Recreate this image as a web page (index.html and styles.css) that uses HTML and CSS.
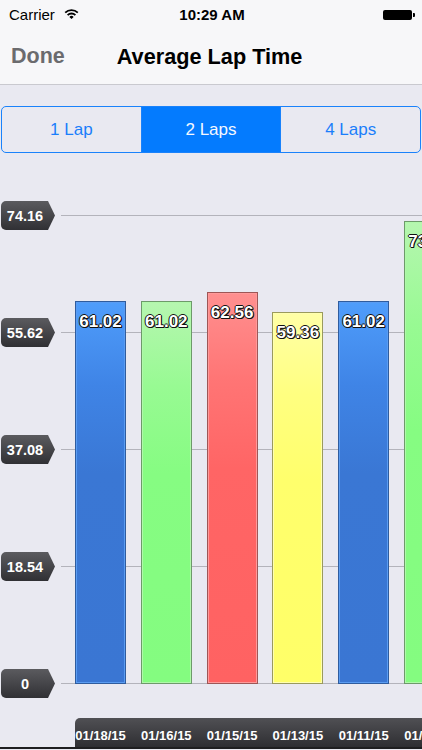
FILE: index.html
```html
<!DOCTYPE html>
<html>
<head>
<meta charset="utf-8">
<link rel="stylesheet" href="styles.css">
</head>
<body>
<div class="screen">
  <header class="top">
    <div class="status">
      <div class="status-left">
        <span class="carrier">Carrier</span>
        <svg class="wifi" width="15" height="11" viewBox="0 0 15 11">
          <path d="M1.2 4.7 A9 9 0 0 1 13.8 4.7" fill="none" stroke="#000" stroke-width="1.8"/>
          <path d="M3.6 7.1 A5.6 5.6 0 0 1 11.4 7.1" fill="none" stroke="#000" stroke-width="1.8"/>
          <path d="M7.5 11 L5.4 8.9 A3 3 0 0 1 9.6 8.9 Z" fill="#000"/>
        </svg>
      </div>
      <div class="time">10:29 AM</div>
      <div class="status-right">
        <div class="battery"><div class="battery-body"></div><div class="battery-nub"></div></div>
      </div>
    </div>
    <nav class="navbar">
      <span class="done">Done</span>
      <span class="title">Average Lap Time</span>
    </nav>
  </header>

  <div class="segment-wrap">
    <div class="segmented">
      <div class="seg">1 Lap</div>
      <div class="seg active">2 Laps</div>
      <div class="seg">4 Laps</div>
    </div>
  </div>

  <div class="chart">
    <div class="axis">
      <div class="tick">74.16</div>
      <div class="tick">55.62</div>
      <div class="tick">37.08</div>
      <div class="tick">18.54</div>
      <div class="tick">0</div>
    </div>
    <div class="plot">
      <div class="lines">
        <div class="line"></div>
        <div class="line"></div>
        <div class="line"></div>
        <div class="line"></div>
        <div class="line"></div>
      </div>
      <div class="bars">
        <div class="bar blue" style="height:383px"><span class="val">61.02</span></div>
        <div class="bar green" style="height:383px"><span class="val">61.02</span></div>
        <div class="bar red" style="height:392px"><span class="val">62.56</span></div>
        <div class="bar yellow" style="height:372px"><span class="val">59.36</span></div>
        <div class="bar blue" style="height:383px"><span class="val">61.02</span></div>
        <div class="bar green" style="height:463px"><span class="val">73.82</span></div>
      </div>
    </div>
  </div>

  <div class="dates">
    <span class="date">01/18/15</span>
    <span class="date">01/16/15</span>
    <span class="date">01/15/15</span>
    <span class="date">01/13/15</span>
    <span class="date">01/11/15</span>
    <span class="date">01/09/15</span>
  </div>
  <div class="bottom-edge"></div>
</div>
</body>
</html>
```
FILE: styles.css
```css
* { box-sizing: border-box; }
html, body { margin: 0; padding: 0; }
body {
  width: 422px;
  height: 750px;
  overflow: hidden;
  background: #e9e9f1;
  font-family: "Liberation Sans", Arial, sans-serif;
}
.screen {
  width: 422px;
  height: 750px;
  display: flex;
  flex-direction: column;
  overflow: hidden;
}
.top {
  background: #f7f7f9;
  border-bottom: 1px solid #c9c9cf;
}
.status {
  height: 26px;
  display: flex;
  align-items: center;
  justify-content: space-between;
  padding: 3px 7px 0 9px;
}
.status-left { display: flex; align-items: center; gap: 9px; width: 120px; }
.carrier { font-size: 15px; color: #000; }
.wifi { margin-top: -2px; }
.time { font-size: 15px; font-weight: bold; color: #000; }
.status-right { width: 120px; display: flex; justify-content: flex-end; }
.battery { display: flex; align-items: center; }
.battery-body { width: 29px; height: 10px; background: #000; border-radius: 2px; }
.battery-nub { width: 2px; height: 4px; background: #000; margin-left: 1px; border-radius: 0 1px 1px 0; }
.navbar {
  height: 58px;
  display: flex;
  align-items: center;
  padding: 3px 11px 0 11px;
}
.done { font-size: 21.5px; font-weight: bold; color: #6b6b6e; }
.title {
  font-size: 21.7px;
  font-weight: bold;
  color: #000;
  margin-left: 52px;
}
.segment-wrap { padding: 21px 1px 0 1px; }
.segmented {
  display: flex;
  height: 47px;
  border: 1px solid #1a82fb;
  border-radius: 5px;
  overflow: hidden;
}
.seg {
  flex: 1;
  display: flex;
  align-items: center;
  justify-content: center;
  font-size: 17px;
  color: #1a7efb;
  border-left: 1px solid #1a82fb;
}
.seg:first-child { border-left: none; }
.seg.active { background: #047bfe; color: #f4f8ff; }

.chart {
  margin-top: 62px;
  display: grid;
  grid-template-columns: 61px 1fr;
  height: 469px;
}
.axis {
  display: flex;
  flex-direction: column;
  justify-content: space-between;
  margin: -14px 0;
  padding-left: 1px;
}
.tick {
  width: 55px;
  height: 29px;
  background: linear-gradient(#5b5b5f, #303034);
  border-radius: 5px;
  clip-path: polygon(0 0, 47px 0, 54px 50%, 47px 100%, 0 100%);
  color: #fff;
  font-weight: bold;
  font-size: 14.5px;
  display: flex;
  align-items: center;
  justify-content: center;
  padding-right: 7px;
}
.plot {
  display: grid;
  overflow: hidden;
}
.lines, .bars { grid-area: 1 / 1; }
.lines {
  display: flex;
  flex-direction: column;
  justify-content: space-between;
}
.line { height: 1px; background: #b3b3bb; }
.bars {
  display: flex;
  align-items: flex-end;
  gap: 14.8px;
  padding-left: 14px;
}
.bar {
  flex: 0 0 51px;
  width: 51px;
  border: 1px solid;
  display: flex;
  justify-content: center;
  padding-top: 10px;
}
.val {
  color: #fff;
  font-weight: bold;
  font-size: 17px;
  white-space: nowrap;
  height: 20px;
  text-shadow: -1px 0 #111, 1px 0 #111, 0 -1px #111, 0 1px #111, 1px 1px #111;
}
.blue {
  background: linear-gradient(#4f9dfb 0%, #3f84e6 22%, #3a77d4 45%, #3a76d3 100%);
  border-color: #2f5c9e;
  box-shadow: inset 0 0 0 1px #5a9cf2;
}
.green {
  background: linear-gradient(#b6f6b0 0%, #98fa93 22%, #86fc82 45%, #84fc80 100%);
  border-color: #6d9a6a;
  box-shadow: inset 0 0 0 1px #b0f8aa;
}
.red {
  background: linear-gradient(#ff9090 0%, #ff7575 22%, #ff6565 45%, #ff6262 100%);
  border-color: #9e5656;
  box-shadow: inset 0 0 0 1px #ff9a9a;
}
.yellow {
  background: linear-gradient(#ffffa6 0%, #ffff80 22%, #ffff6c 45%, #ffff68 100%);
  border-color: #9a9a5c;
  box-shadow: inset 0 0 0 1px #ffffb0;
}
.dates {
  margin-top: 34px;
  margin-left: 75px;
  height: 29px;
  background: linear-gradient(#505054, #2e2e32);
  border-radius: 5px 0 0 0;
  display: flex;
  align-items: center;
  gap: 14.8px;
  overflow: hidden;
}
.date {
  flex: 0 0 51px;
  text-align: center;
  color: #fff;
  font-weight: bold;
  font-size: 13px;
  white-space: nowrap;
  padding-top: 5px;
}
.bottom-edge { height: 2px; background: #1e1e20; }
```
